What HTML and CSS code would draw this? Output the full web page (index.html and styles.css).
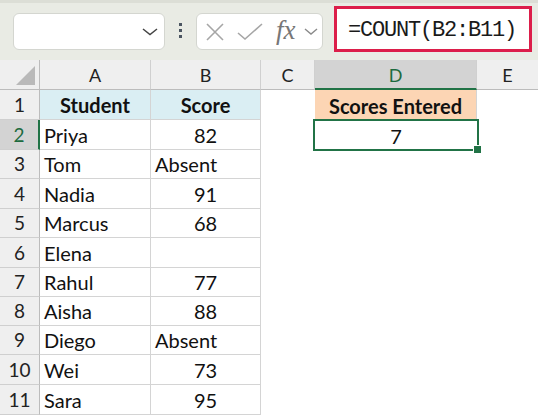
FILE: index.html
```html
<!DOCTYPE html>
<html lang="en">
<head>
    <meta charset="UTF-8">
    <title>COUNT example</title>
    <link rel="stylesheet" href="styles.css">
</head>
<body>
    <!-- Formula bar -->
    <div class="toolbar">
        <div class="name-box">
            <svg class="chev" width="16" height="8" viewBox="0 0 16 8"><path d="M1 1 L8 6.5 L15 1" fill="none" stroke="#444" stroke-width="1.5"/></svg>
        </div>
        <div class="grip"><span></span><span></span><span></span></div>
        <div class="fx-buttons">
            <svg width="18" height="18" viewBox="0 0 18 18"><path d="M1 1 L17 17 M17 1 L1 17" stroke="#a6a6a6" stroke-width="1.6" fill="none"/></svg>
            <svg width="26" height="18" viewBox="0 0 26 18"><path d="M1 10 L8 16 L25 1" stroke="#a6a6a6" stroke-width="1.6" fill="none"/></svg>
            <span class="fx">fx</span>
            <svg width="14" height="8" viewBox="0 0 14 8"><path d="M1 1 L7 6 L13 1" fill="none" stroke="#8a8a8a" stroke-width="1.4"/></svg>
        </div>
        <div class="formula">=COUNT(B2:B11)</div>
    </div>

    <!-- Sheet -->
    <div class="sheet">
        <div class="col-head corner"><span class="tri"></span></div>
        <div class="col-head">A</div>
        <div class="col-head">B</div>
        <div class="col-head">C</div>
        <div class="col-head active">D</div>
        <div class="col-head last">E</div>

        <div class="row-head">1</div>
        <div class="cell head-a">Student</div>
        <div class="cell head-a">Score</div>
        <div class="blank"></div>
        <div class="blank head-d">Scores Entered</div>
        <div class="blank"></div>

        <div class="row-head active">2</div>
        <div class="cell">Priya</div>
        <div class="cell num">82</div>
        <div class="blank"></div>
        <div class="blank selected">7</div>
        <div class="blank"></div>

        <div class="row-head">3</div>
        <div class="cell">Tom</div>
        <div class="cell">Absent</div>
        <div class="blank"></div>
        <div class="blank"></div>
        <div class="blank"></div>

        <div class="row-head">4</div>
        <div class="cell">Nadia</div>
        <div class="cell num">91</div>
        <div class="blank"></div>
        <div class="blank"></div>
        <div class="blank"></div>

        <div class="row-head">5</div>
        <div class="cell">Marcus</div>
        <div class="cell num">68</div>
        <div class="blank"></div>
        <div class="blank"></div>
        <div class="blank"></div>

        <div class="row-head">6</div>
        <div class="cell">Elena</div>
        <div class="cell"></div>
        <div class="blank"></div>
        <div class="blank"></div>
        <div class="blank"></div>

        <div class="row-head">7</div>
        <div class="cell">Rahul</div>
        <div class="cell num">77</div>
        <div class="blank"></div>
        <div class="blank"></div>
        <div class="blank"></div>

        <div class="row-head">8</div>
        <div class="cell">Aisha</div>
        <div class="cell num">88</div>
        <div class="blank"></div>
        <div class="blank"></div>
        <div class="blank"></div>

        <div class="row-head">9</div>
        <div class="cell">Diego</div>
        <div class="cell">Absent</div>
        <div class="blank"></div>
        <div class="blank"></div>
        <div class="blank"></div>

        <div class="row-head">10</div>
        <div class="cell">Wei</div>
        <div class="cell num">73</div>
        <div class="blank"></div>
        <div class="blank"></div>
        <div class="blank"></div>

        <div class="row-head">11</div>
        <div class="cell">Sara</div>
        <div class="cell num">95</div>
        <div class="blank"></div>
        <div class="blank"></div>
        <div class="blank"></div>
    </div>
</body>
</html>
```

FILE: styles.css
```css
body {
    margin: 0;
    padding: 0;
    width: 538px;
    height: 416px;
    overflow: hidden;
    background: #fff;
    font-family: Lato, "Open Sans", sans-serif;
    color: #111;
}

/* ---------- formula bar ---------- */
.toolbar {
    height: 57px;
    border-top: 3px solid #dcded6;
    background: #e9ebe4;
    display: flex;
    align-items: flex-start;
}

.name-box {
    margin: 10px 0 0 13px;
    width: 152px;
    height: 37px;
    box-sizing: border-box;
    background: #fff;
    border: 1px solid #d4d6d0;
    border-radius: 6px;
    display: flex;
    align-items: center;
    justify-content: flex-end;
    padding-right: 6px;
}

.grip {
    margin: 20px 0 0 14px;
    display: flex;
    flex-direction: column;
    gap: 3px;
}

.grip span {
    width: 3px;
    height: 3px;
    background: #4b5561;
}

.fx-buttons {
    margin: 10px 0 0 14px;
    width: 127px;
    height: 37px;
    box-sizing: border-box;
    background: #fff;
    border: 1px solid #d4d6d0;
    border-radius: 6px;
    display: flex;
    align-items: center;
    padding-left: 9px;
    gap: 13px;
}

.fx-buttons .fx {
    font-family: "Liberation Serif", serif;
    font-style: italic;
    font-size: 27px;
    line-height: 1;
    color: #777;
    margin-right: -5px;
    padding-bottom: 3px;
}

.formula {
    margin: 3px 0 0 11px;
    width: 198px;
    height: 46px;
    box-sizing: border-box;
    background: #fff;
    border: 3px solid #dc1e4a;
    font-family: "Liberation Mono", monospace;
    font-size: 22px;
    letter-spacing: -1.2px;
    line-height: 1;
    color: #1a1a1a;
    padding: 11px 0 0 11px;
    white-space: nowrap;
}

/* ---------- sheet ---------- */
.sheet {
    display: grid;
    grid-template-columns: 40px 111px 110px 54px 162px 1fr;
    grid-template-rows: 30px 30px 30px 29px 30px 29px 30px 29px 29px 29px 30px 30px;
    font-size: 20px;
}

.col-head {
    background: #efefef;
    border-bottom: 1px solid #bcbcbc;
    border-right: 1px solid #d0d0d0;
    display: flex;
    align-items: center;
    justify-content: center;
    font-size: 18px;
    color: #222;
    padding-top: 1px;
    box-sizing: border-box;
}

.col-head.last {
    border-right: none;
}

.col-head.active {
    background: #d3d3d3;
    color: #1d6b3f;
    border-bottom: 2px solid #217346;
}

.corner {
    position: relative;
    border-right: 1px solid #bcbcbc;
}

.corner .tri {
    position: absolute;
    right: 4px;
    bottom: 4px;
    width: 19px;
    height: 19px;
    background: #b9b9b9;
    clip-path: polygon(100% 0, 100% 100%, 0 100%);
}

.row-head {
    background: #efefef;
    border-right: 1px solid #bcbcbc;
    border-bottom: 1px solid #cfcfcf;
    display: flex;
    align-items: flex-end;
    justify-content: center;
    padding-bottom: 3px;
    box-sizing: border-box;
    font-size: 19px;
    color: #222;
}

.row-head.active {
    background: #d3d3d3;
    color: #1d6b3f;
    border-right: 2px solid #217346;
}

.cell {
    border-right: 1px solid #d4d4d4;
    border-bottom: 1px solid #d4d4d4;
    box-sizing: border-box;
    display: flex;
    align-items: flex-end;
    padding: 0 0 2px 4px;
    white-space: nowrap;
}

.cell.num {
    justify-content: center;
    padding-left: 0;
}

.cell.head-a {
    background: #daeef3;
    font-weight: bold;
    justify-content: center;
    padding-left: 0;
}

.blank {
    box-sizing: border-box;
    display: flex;
    align-items: flex-end;
    justify-content: center;
    padding-bottom: 2px;
}

.head-d {
    background: #fcd5b4;
    font-weight: bold;
    border-right: 1px solid #d4d4d4;
}

.selected {
    position: relative;
}

.selected::after {
    content: "";
    position: absolute;
    left: -2px;
    top: -1px;
    right: -2px;
    bottom: -1px;
    border: 2px solid #217346;
}

.selected::before {
    content: "";
    position: absolute;
    right: -5px;
    bottom: -4px;
    width: 7px;
    height: 7px;
    background: #217346;
    border: 1px solid #fff;
    z-index: 1;
}
```
